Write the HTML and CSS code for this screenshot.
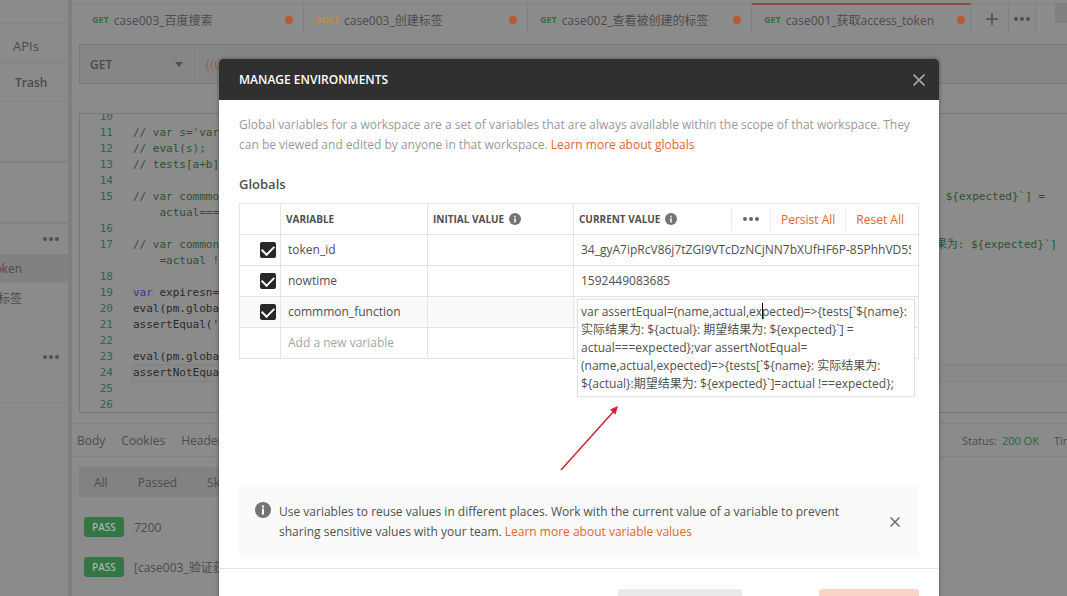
FILE: index.html
```html
<!DOCTYPE html>
<html lang="en">

<head>
    <meta charset="UTF-8">
    <meta name="viewport" content="width=device-width, initial-scale=1.0">
    <title>Manage Environments</title>

    <link rel="stylesheet" href="styles.css">
</head>

<body>
    <div class="app">
        <aside class="sidebar">
            <div class="side-top"></div>
            <a href="#" class="side-tab">APIs</a>
            <a href="#" class="side-tab side-trash">Trash</a>
            <div class="side-block"></div>
            <div class="side-block"></div>
            <div class="side-more"><button type="button" class="dots" aria-label="More">
                <svg width="18" height="6" viewBox="0 0 18 6"><circle cx="3" cy="3" r="2"/><circle cx="9" cy="3" r="2"/><circle cx="15" cy="3" r="2"/></svg>
            </button></div>
            <a href="#" class="side-item active">oken</a>
            <a href="#" class="side-item">标签</a>
            <div class="side-more side-last"><button type="button" class="dots" aria-label="More">
                <svg width="18" height="6" viewBox="0 0 18 6"><circle cx="3" cy="3" r="2"/><circle cx="9" cy="3" r="2"/><circle cx="15" cy="3" r="2"/></svg>
            </button></div>
        </aside>

        <main class="main">
            <nav class="tabs">
                <a href="#" class="tab"><b class="get">GET</b><span>case003_百度搜索</span><i class="unsaved"></i></a>
                <a href="#" class="tab"><b class="post">POST</b><span>case003_创建标签</span><i class="unsaved"></i></a>
                <a href="#" class="tab"><b class="get">GET</b><span>case002_查看被创建的标签</span><i class="unsaved"></i></a>
                <a href="#" class="tab current"><b class="get">GET</b><span>case001_获取access_token</span><i class="unsaved"></i></a>
                <button type="button" class="tab-btn" aria-label="New tab">
                    <svg width="12" height="12" viewBox="0 0 12 12"><path d="M6 0v12M0 6h12" stroke="#505050" stroke-width="1.6"/></svg>
                </button>
                <button type="button" class="tab-btn dots" aria-label="Tab options">
                    <svg width="18" height="6" viewBox="0 0 18 6"><circle cx="3" cy="3" r="2"/><circle cx="9" cy="3" r="2"/><circle cx="15" cy="3" r="2"/></svg>
                </button>
                <div class="env"></div>
            </nav>

            <div class="url-bar">
                <div class="method">
                    <select aria-label="Method">
                        <option>GET</option>
                    </select>
                </div>
                <input type="text" class="url" aria-label="Request URL" value="{{url}}">
            </div>

            <div class="editor">
                <div class="code">
                    <div class="line"><span class="num">10</span></div>
                    <div class="line comment"><span class="num">11</span>// var s='var</div>
                    <div class="line comment"><span class="num">12</span>// eval(s);</div>
                    <div class="line comment"><span class="num">13</span>// tests[a+b]</div>
                    <div class="line"><span class="num">14</span></div>
                    <div class="line comment"><span class="num">15</span>// var commmo<span class="tail">${expected}`] =</span></div>
                    <div class="line comment"><span class="num"></span>    actual===</div>
                    <div class="line"><span class="num">16</span></div>
                    <div class="line comment"><span class="num">17</span>// var common<span class="tail tail-long">果为: ${expected}`]</span></div>
                    <div class="line comment"><span class="num"></span>    =actual !</div>
                    <div class="line"><span class="num">18</span></div>
                    <div class="line"><span class="num">19</span><span class="keyword">var</span> expiresn=</div>
                    <div class="line"><span class="num">20</span>eval(pm.globa</div>
                    <div class="line"><span class="num">21</span>assertEqual('</div>
                    <div class="line"><span class="num">22</span></div>
                    <div class="line"><span class="num">23</span>eval(pm.globa</div>
                    <div class="line"><span class="num">24</span><span class="active-line">assertNotEqua</span></div>
                    <div class="line"><span class="num">25</span></div>
                    <div class="line"><span class="num">26</span></div>
                </div>
            </div>

            <div class="response-bar">
                <a href="#">Body</a>
                <a href="#">Cookies</a>
                <a href="#">Headers</a>
                <div class="status"><span>Status:</span><span class="ok">200 OK</span><span class="time">Time:</span></div>
            </div>

            <div class="filters">
                <button type="button">All</button>
                <button type="button">Passed</button>
                <button type="button">Skipped</button>
            </div>

            <div class="result"><span class="pass">PASS</span>7200</div>
            <div class="result"><span class="pass">PASS</span>[case003_验证获</div>
        </main>
    </div>

    <div class="overlay">
        <div class="modal" role="dialog" aria-labelledby="modal-title">
            <header class="modal-header">
                <h1 id="modal-title">MANAGE ENVIRONMENTS</h1>
                <button type="button" class="close" aria-label="Close">
                    <svg width="12" height="12" viewBox="0 0 12 12"><path d="M0.5 0.5l11 11M11.5 0.5l-11 11" stroke="#a8a8a8" stroke-width="1.6"/></svg>
                </button>
            </header>

            <div class="modal-body">
                <p class="intro">Global variables for a workspace are a set of variables that are always available within the scope of that workspace. They can be viewed and edited by anyone in that workspace. <a href="#">Learn more about globals</a></p>

                <h2>Globals</h2>

                <table class="variables">
                    <colgroup>
                        <col class="col-check">
                        <col class="col-name">
                        <col class="col-initial">
                        <col>
                    </colgroup>
                    <thead>
                        <tr>
                            <th></th>
                            <th>VARIABLE</th>
                            <th>
                                <div class="th-row">INITIAL VALUE
                                    <svg width="12" height="12" viewBox="0 0 16 16"><circle cx="8" cy="8" r="8" fill="#747474"/><path d="M7 3.5h2v2H7zM7 7h2v5.5H7z" fill="#fff"/></svg>
                                </div>
                            </th>
                            <th>
                                <div class="th-row">CURRENT VALUE
                                    <svg width="12" height="12" viewBox="0 0 16 16"><circle cx="8" cy="8" r="8" fill="#747474"/><path d="M7 3.5h2v2H7zM7 7h2v5.5H7z" fill="#fff"/></svg>
                                    <div class="th-actions">
                                        <button type="button" class="dots" aria-label="Columns">
                                            <svg width="18" height="6" viewBox="0 0 18 6"><circle cx="3" cy="3" r="2"/><circle cx="9" cy="3" r="2"/><circle cx="15" cy="3" r="2"/></svg>
                                        </button>
                                        <button type="button">Persist All</button>
                                        <button type="button">Reset All</button>
                                    </div>
                                </div>
                            </th>
                        </tr>
                    </thead>
                    <tbody>
                        <tr>
                            <td><input type="checkbox" aria-label="Enable token_id" checked></td>
                            <td><input type="text" aria-label="Variable" value="token_id"></td>
                            <td><input type="text" aria-label="Initial value"></td>
                            <td><input type="text" aria-label="Current value" value="34_gyA7ipRcV86j7tZGI9VTcDzNCjNN7bXUfHF6P-85PhhVD5SkQ"></td>
                        </tr>
                        <tr>
                            <td><input type="checkbox" aria-label="Enable nowtime" checked></td>
                            <td><input type="text" aria-label="Variable" value="nowtime"></td>
                            <td><input type="text" aria-label="Initial value"></td>
                            <td><input type="text" aria-label="Current value" value="1592449083685"></td>
                        </tr>
                        <tr class="selected">
                            <td><input type="checkbox" aria-label="Enable commmon_function" checked></td>
                            <td><input type="text" aria-label="Variable" value="commmon_function"></td>
                            <td><input type="text" aria-label="Initial value"></td>
                            <td class="editing">
                                <textarea aria-label="Current value" rows="5" spellcheck="false">var assertEqual=(name,actual,expected)=>{tests[`${name}:
实际结果为: ${actual}: 期望结果为: ${expected}`] =
actual===expected};var assertNotEqual=
(name,actual,expected)=>{tests[`${name}: 实际结果为:
${actual}:期望结果为: ${expected}`]=actual !==expected};</textarea>
                                <span class="caret"></span>
                            </td>
                        </tr>
                        <tr>
                            <td></td>
                            <td><input type="text" aria-label="Variable" placeholder="Add a new variable"></td>
                            <td></td>
                            <td></td>
                        </tr>
                    </tbody>
                </table>

                <svg class="arrow" width="60" height="68" viewBox="0 0 60 68">
                    <path d="M1 66L54 7" stroke="#c5282f" stroke-width="1.5" fill="none"/>
                    <path d="M58 2L55.5 10.5L50 5.5z" fill="#d8202c"/>
                </svg>

                <div class="tip">
                    <svg width="16" height="16" viewBox="0 0 16 16"><circle cx="8" cy="8" r="8" fill="#747474"/><path d="M7 3.5h2v2H7zM7 6.5h2v6H7z" fill="#fff"/></svg>
                    <p>Use variables to reuse values in different places. Work with the current value of a variable to prevent sharing sensitive values with your team. <a href="#">Learn more about variable values</a></p>
                    <button type="button" class="close" aria-label="Dismiss">
                        <svg width="10" height="10" viewBox="0 0 10 10"><path d="M0.5 0.5l9 9M9.5 0.5l-9 9" stroke="#6b6b6b" stroke-width="1.5"/></svg>
                    </button>
                </div>
            </div>

            <footer class="modal-footer">
                <button type="button" class="btn btn-secondary" aria-label="Download as JSON"></button>
                <button type="button" class="btn btn-primary" aria-label="Save"></button>
            </footer>
        </div>
    </div>
</body>

</html>
```

FILE: styles.css
```css
* {
    box-sizing: border-box;
    padding: 0;
    margin: 0;
}

body {
    height: 100vh;
    overflow: hidden;
    background-color: #8b8b8b;
    color: #505050;
    font-family: "Open Sans", "Noto Sans CJK SC", sans-serif;
    font-size: 12px;
}

a {
    text-decoration: none;
    color: inherit;
}

button,
input,
select,
textarea {
    border: none;
    background: none;
    color: inherit;
    font: inherit;
    outline: none;
}

button {
    cursor: pointer;
}

.dots {
    fill: #505050;
}

svg {
    display: block;
    flex-shrink: 0;
}

/* page behind the dialog */

.app {
    display: flex;
    height: 100vh;
    overflow: hidden;
    color: #4c4c4c;
}

.sidebar {
    width: 72px;
    flex-shrink: 0;
    border-right: 4px solid #808080;
}

.side-top {
    height: 24px;
    border-bottom: 1px solid #848484;
}

.side-tab {
    display: flex;
    align-items: center;
    height: 39px;
    padding: 5px 0 0 13px;
    border-bottom: 1px solid #828282;
    font-size: 13px;
}

.side-trash {
    padding: 0 0 0 15px;
    font-size: 12px;
    font-weight: 600;
}

.side-block {
    height: 61px;
    border-bottom: 2px solid #828282;
}

.side-more {
    display: flex;
    justify-content: flex-end;
    align-items: center;
    height: 30px;
    padding-right: 8px;
}

.side-item {
    display: flex;
    align-items: center;
    justify-content: flex-end;
    height: 29px;
    padding-right: 46px;
    white-space: nowrap;
}

.side-item.active {
    background-color: #818181;
}

.side-last {
    height: 91px;
    border-bottom: 1px solid #828282;
}

.main {
    flex: 1;
    min-width: 0;
    padding-top: 3px;
}

.tabs {
    display: flex;
    height: 30px;
    padding-left: 8px;
    border-top: 1px solid #848484;
}

.tab {
    display: flex;
    align-items: center;
    gap: 5px;
    flex: 0 1 224px;
    padding: 2px 10px 0 12px;
    border-right: 1px solid #808080;
}

.tab b {
    font-size: 9px;
}

.get {
    color: #34704a;
}

.post {
    color: #c0922c;
}

.unsaved {
    width: 8px;
    height: 8px;
    margin-left: auto;
    border-radius: 50%;
    background-color: #b85a2d;
}

.tab.current {
    flex-basis: 219px;
    margin-top: -1px;
    padding-top: 1px;
    padding-right: 5px;
    border-top: 2px solid #8f4a42;
}

.tab-btn {
    display: flex;
    align-items: center;
    justify-content: center;
    width: 32px;
    margin-left: 5px;
    flex-shrink: 0;
}

.tab-btn.dots {
    width: 28px;
    margin-left: 0;
    border: solid #808080;
    border-width: 0 1px;
}

.env {
    flex: 1;
    height: 19px;
    margin-left: 19px;
    background-color: #808080;
}

.url-bar {
    display: flex;
    height: 40px;
    margin: 11px 0 0 7px;
    border: 1px solid #797979;
    border-right: none;
    background-color: #868686;
}

.method {
    display: flex;
    align-items: center;
    width: 115px;
    padding: 0 11px 0 10px;
    border-right: 1px solid #7d7d7d;
}

.method::after {
    content: "";
    border: 4px solid transparent;
    border-top: 5px solid #505050;
    border-bottom: none;
}

.method select {
    flex: 1;
    appearance: none;
    font-weight: 600;
}

.url {
    flex: 1;
    padding-left: 10px;
    color: #9d5b45;
}

.editor {
    height: 300px;
    margin: 29px 0 0 7px;
    border: 1px solid #777;
    border-right: none;
    overflow: hidden;
}

.code {
    margin-top: -5px;
    color: #2a2a2a;
    font-family: "DejaVu Sans Mono", "Noto Sans CJK SC", monospace;
    font-size: 11px;
}

.line {
    display: flex;
    height: 16px;
    line-height: 16px;
    white-space: pre;
}

.num {
    flex-shrink: 0;
    width: 53px;
    padding-right: 20px;
    text-align: right;
    color: #35605a;
}

.comment {
    color: #2a552a;
}

.keyword {
    color: #3c3690;
}

.active-line {
    flex: 1;
    background-color: #898989;
    box-shadow: 0 0 0 1px #808080;
}

.tail {
    margin-left: auto;
    padding-right: 22px;
}

.tail-long {
    padding-right: 10px;
}

.response-bar {
    display: flex;
    align-items: center;
    gap: 16px;
    height: 34px;
    margin-top: 10px;
    padding-left: 5px;
    border: solid #818181;
    border-width: 1px 0;
}

.status {
    display: flex;
    gap: 5px;
    width: 105px;
    margin-left: auto;
    overflow: hidden;
    white-space: nowrap;
    font-size: 11px;
}

.ok {
    color: #2c6443;
}

.time {
    margin-left: 10px;
}

.filters {
    display: flex;
    align-items: center;
    gap: 30px;
    width: 300px;
    height: 30px;
    margin: 10px 0 20px 7px;
    padding-left: 15px;
    background-color: #828282;
}

.result {
    display: flex;
    align-items: center;
    gap: 10px;
    height: 20px;
    margin: 0 0 20px 12px;
}

.pass {
    width: 40px;
    border-radius: 3px;
    background-color: #357546;
    color: #a3b8a8;
    font-size: 10px;
    font-weight: 600;
    line-height: 20px;
    text-align: center;
}

/* dialog */

.overlay {
    position: absolute;
    inset: 0;
    padding: 59px 128px 0 219px;
    overflow: hidden;
}

.modal {
    border-radius: 4px;
    background-color: #fff;
    box-shadow: 0 0 4px rgba(0, 0, 0, 0.4);
}

.modal-header {
    display: flex;
    align-items: center;
    justify-content: space-between;
    height: 41px;
    padding: 0 14px 0 20px;
    border-radius: 4px 4px 0 0;
    background-color: #303030;
    color: #fff;
}

.modal-header h1 {
    font-size: 12px;
    font-weight: 600;
}

.close {
    display: flex;
}

.modal-body {
    position: relative;
    padding: 15px 20px 11px;
}

.modal-body a,
.th-actions {
    color: #e0652f;
}

.intro {
    color: #999;
    line-height: 20px;
}

h2 {
    margin: 19px 0 9px;
    font-size: 13px;
    font-weight: 600;
    line-height: 20px;
}

.variables {
    width: 100%;
    table-layout: fixed;
    border-collapse: collapse;
}

.col-check {
    width: 41px;
}

.col-name {
    width: 147px;
}

.col-initial {
    width: 146px;
}

.variables th,
.variables td {
    height: 31px;
    border: 1px solid #e4e4e4;
    vertical-align: middle;
}

.variables th {
    padding-left: 5px;
    font-size: 10px;
    font-weight: 700;
    text-align: left;
}

.th-row {
    display: flex;
    align-items: center;
    gap: 5px;
    white-space: nowrap;
}

.th-actions {
    display: flex;
    align-items: center;
    margin-left: auto;
    padding-right: 4px;
    font-size: 12px;
    font-weight: 400;
}

.th-actions button {
    height: 24px;
    padding: 0 10px;
    border-left: 1px solid #ececec;
}

.th-actions .dots {
    fill: #666;
}

.variables input[type="text"] {
    display: block;
    width: 100%;
    padding: 0 7px;
    line-height: 20px;
}

.variables ::placeholder {
    color: #a6a6a6;
}

.variables input[type="checkbox"] {
    display: flex;
    justify-content: center;
    appearance: none;
    width: 16px;
    height: 16px;
    margin-left: 20px;
    padding-top: 3px;
    border-radius: 2px;
    background-color: #282828;
}

.variables input[type="checkbox"]::after {
    content: "";
    width: 10px;
    height: 6px;
    border: solid #fff;
    border-width: 0 0 2px 2px;
    transform: rotate(-45deg);
}

.selected {
    background-color: #fafafa;
}

.variables .editing {
    position: relative;
}

.editing textarea {
    position: absolute;
    top: 2px;
    left: 3px;
    width: calc(100% - 6px);
    height: 98px;
    padding: 3px;
    border: 1px solid #e0e0e0;
    background-color: #fff;
    line-height: 18px;
    white-space: pre;
    resize: none;
    overflow: hidden;
}

.caret {
    position: absolute;
    top: 6px;
    left: 188px;
    width: 1px;
    height: 16px;
    background-color: #000;
}

.arrow {
    position: absolute;
    top: 304px;
    left: 341px;
}

.tip {
    display: flex;
    gap: 8px;
    margin-top: 128px;
    padding: 15px 19px 15px 16px;
    background-color: #fafafa;
    line-height: 20px;
}

.tip p {
    flex: 1;
    padding-right: 40px;
}

.tip .close {
    align-self: center;
}

.modal-footer {
    display: flex;
    justify-content: flex-end;
    gap: 77px;
    padding: 20px;
    border-top: 1px solid #e4e4e4;
}

.btn {
    width: 100px;
    height: 40px;
    border-radius: 3px;
}

.btn-secondary {
    width: 124px;
    background-color: #eaeaea;
}

.btn-primary {
    background-color: #f9d3c5;
}
```
